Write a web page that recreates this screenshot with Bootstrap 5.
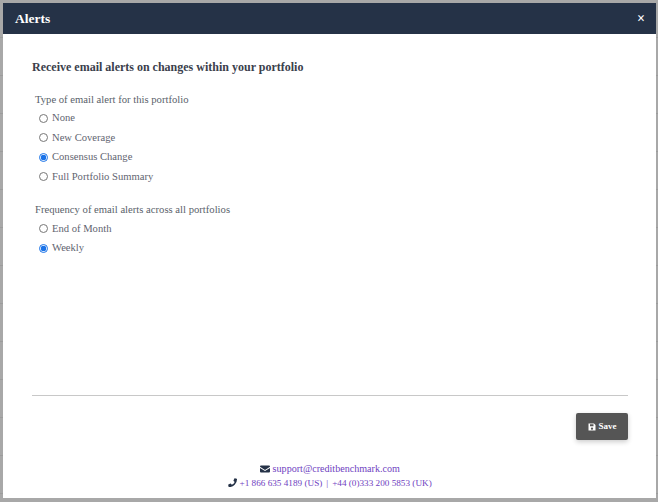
<!DOCTYPE html>
<html lang="en">
<head>
<meta charset="utf-8">
<title>Alerts</title>
<link rel="stylesheet" href="https://cdn.jsdelivr.net/npm/bootstrap@5.3.0/dist/css/bootstrap.min.css">
<style>
html,body{height:502px;overflow:hidden}
body{background:repeating-linear-gradient(180deg,#a8a8a8 0,#a8a8a8 37px,#9c9c9c 37px,#9c9c9c 38px);font-family:"Liberation Serif",serif;color:#4a4f5a;padding:3px 2px 4px 3px}
.alert-shell{height:495px;border:0;border-radius:0;background:#fff}
.alert-head{height:31px;background:#253247;color:#fff;padding:1px 11px 0 12px;border:0;border-radius:0}
.alert-head h1{font-size:13.5px;font-weight:700;margin:0;font-family:"Liberation Serif",serif}
.alert-x{font-size:14px;line-height:1;font-weight:700;color:#fff;background:none;border:0;padding:0}
.alert-body{padding:25px 28px 0 29px}
.alert-lead{font-size:12px;font-weight:700;color:#3a404c;margin:0 0 17px;line-height:16px}
.group-label{font-size:10.65px;line-height:16px;margin:0 0 .4px 3px;color:#5a5f6a}
.opt{display:flex;align-items:center;min-height:0;height:19.6px;margin:0 0 0 7px;padding:0;font-size:10.6px;gap:4px}
.opt .form-check-input{width:9px;height:9px;margin:0;float:none;border-color:#777;flex:none}
.opt .form-check-input:checked{background-color:#fff;background-image:radial-gradient(circle,#1a73e8 0,#1a73e8 2.6px,#fff 3.1px);border-color:#1a73e8}
.opt .form-check-label{color:#5f6470}
.opt-group{margin-bottom:15.6px}
.alert-rule{margin:0;border-color:#c8c8c8;opacity:1}
.save-btn{background:#555;color:#fff;border:0;border-radius:2px;font-size:9px;font-weight:700;width:52px;height:27px;padding:0;box-shadow:0 2px 5px rgba(0,0,0,.2);font-family:"Liberation Serif",serif;display:flex;align-items:center;justify-content:center;gap:3px}
.save-row{margin-top:17px}
.contact{margin-top:22px;padding-bottom:8px;font-size:10.1px;line-height:14px}
.contact-link,.contact-sep{color:#6f42c1}
.contact-phone{font-size:9.2px}
.contact svg{vertical-align:-1px}
.contact-sep{margin:0 4px}
</style>
</head>
<body>
<div class="modal-content alert-shell d-flex flex-column">
  <div class="modal-header alert-head d-flex align-items-center justify-content-between">
    <h1>Alerts</h1>
    <button type="button" class="alert-x">×</button>
  </div>
  <div class="modal-body alert-body d-flex flex-column">
    <p class="alert-lead">Receive email alerts on changes within your portfolio</p>
    <p class="group-label">Type of email alert for this portfolio</p>
    <div class="opt-group">
      <div class="form-check opt"><input class="form-check-input" type="radio" name="a" id="a1"><label class="form-check-label" for="a1">None</label></div>
      <div class="form-check opt"><input class="form-check-input" type="radio" name="a" id="a2"><label class="form-check-label" for="a2">New Coverage</label></div>
      <div class="form-check opt"><input class="form-check-input" type="radio" name="a" id="a3" checked><label class="form-check-label" for="a3">Consensus Change</label></div>
      <div class="form-check opt"><input class="form-check-input" type="radio" name="a" id="a4"><label class="form-check-label" for="a4">Full Portfolio Summary</label></div>
    </div>
    <p class="group-label">Frequency of email alerts across all portfolios</p>
    <div class="opt-group">
      <div class="form-check opt"><input class="form-check-input" type="radio" name="b" id="b1"><label class="form-check-label" for="b1">End of Month</label></div>
      <div class="form-check opt"><input class="form-check-input" type="radio" name="b" id="b2" checked><label class="form-check-label" for="b2">Weekly</label></div>
    </div>
    <div class="mt-auto">
      <hr class="alert-rule">
      <div class="d-flex justify-content-end save-row">
        <button type="button" class="btn save-btn">
          <svg width="8" height="8" viewBox="0 0 16 16" fill="#fff"><path d="M1 1h11l3 3v11H1zM4 2.5v4h7v-4zM8 9a2.3 2.3 0 1 0 0 4.6A2.3 2.3 0 0 0 8 9z" fill-rule="evenodd"/></svg>
          Save</button>
      </div>
      <div class="contact text-center">
        <div><svg width="10" height="8" viewBox="0 0 20 16" fill="#253247"><path d="M0 3a2 2 0 0 1 2-2h16a2 2 0 0 1 2 2v.6l-10 6.2L0 3.6z"/><path d="M0 6l10 6.2L20 6v7a2 2 0 0 1-2 2H2a2 2 0 0 1-2-2z"/></svg> <a class="text-decoration-none contact-link" href="#">support@creditbenchmark.com</a></div>
        <div class="contact-phone"><svg width="9" height="9" viewBox="0 0 16 16" fill="#253247"><path d="M15.5 1.2 12.2.4a.8.8 0 0 0-.9.5L9.8 4.4a.8.8 0 0 0 .2.9l1.9 1.6a11.6 11.6 0 0 1-5.1 5.1L5.2 10.1a.8.8 0 0 0-.9-.2L.8 11.4a.8.8 0 0 0-.5.9l.8 3.3a.8.8 0 0 0 .8.6A14 14 0 0 0 16 2a.8.8 0 0 0-.5-.8z"/></svg> <a class="text-decoration-none contact-link" href="#">+1 866 635 4189 (US)</a><span class="contact-sep">|</span><a class="text-decoration-none contact-link" href="#">+44 (0)333 200 5853 (UK)</a></div>
      </div>
    </div>
  </div>
</div>
<script src="https://cdn.jsdelivr.net/npm/bootstrap@5.3.0/dist/js/bootstrap.bundle.min.js"></script>
</body>
</html>
